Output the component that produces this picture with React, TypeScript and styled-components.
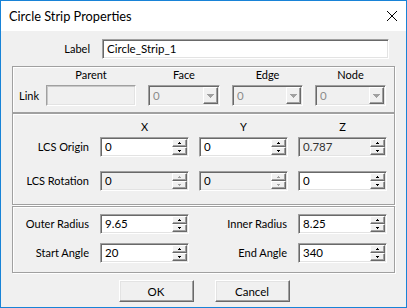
import React from "react";
import styled, { createGlobalStyle } from "styled-components";

const GlobalStyle = createGlobalStyle`
  html, body { margin: 0; padding: 0; background: #fff; }
  body {
    font-family: Lato, "Noto Sans", sans-serif;
    font-size: 11px;
    color: #000;
  }
  * { box-sizing: border-box; }
`;

const Window = styled.div`
  width: 407px;
  height: 308px;
  border: 1px solid #1883d7;
  background: #f0f0f0;
  display: flex;
  flex-direction: column;
`;

const TitleBar = styled.div`
  height: 30px;
  flex: none;
  background: #fff;
  display: flex;
  align-items: center;
  justify-content: space-between;
  padding: 0 9px 0 8px;
`;

const Title = styled.span`
  font-size: 12.8px;
  line-height: 14px;
`;

const Body = styled.div`
  display: flex;
  flex-direction: column;
  padding: 8px 10px 0 11px;
`;

const LabelRow = styled.div`
  display: grid;
  grid-template-columns: 90px 287px;
  align-items: center;
  height: 20px;
  margin-bottom: 7px;
`;

const Caption = styled.span<{ $align?: string }>`
  white-space: nowrap;
  line-height: 14px;
  text-align: ${(p) => p.$align || "right"};
  padding-right: ${(p) => (p.$align === "left" ? 0 : 12)}px;
`;

const Group = styled.div<{ $pt: number; $pb: number; $mt?: number; $gap: number }>`
  width: 383px;
  margin-top: ${(p) => p.$mt || 0}px;
  padding: ${(p) => p.$pt}px 0 ${(p) => p.$pb}px 0;
  border: 1px solid #a0a0a0;
  box-shadow: inset 1px 1px 0 #fff, 1px 1px 0 #fff;
  display: flex;
  flex-direction: column;
  gap: ${(p) => p.$gap}px;
`;

const LinkGrid = styled.div`
  display: grid;
  grid-template-columns: 15px 90px 72px 71px 71px;
  column-gap: 12px;
  row-gap: 3px;
  padding-left: 6px;
  align-items: center;
`;

const FieldGrid = styled.div<{ $mt?: number }>`
  display: grid;
  grid-template-columns: 77px 89px 89px 89px;
  column-gap: 10px;
  align-items: center;
  margin-top: ${(p) => p.$mt || 0}px;
`;

const Head = styled.span`
  text-align: center;
  line-height: 14px;
  white-space: nowrap;
`;

const RowLabel = styled.span`
  text-align: right;
  white-space: nowrap;
  line-height: 14px;
  padding-right: 1px;
`;

const Sunken = styled.div<{ $w: number; $h: number; $bg?: string; $soft?: boolean }>`
  width: ${(p) => p.$w}px;
  height: ${(p) => p.$h}px;
  background: ${(p) => p.$bg || "#fff"};
  border: 1px solid;
  border-color: #a0a0a0 #fff #fff #a0a0a0;
  box-shadow: inset 1px 1px 0 ${(p) => (p.$soft ? "#c8c8c8" : "#696969")},
    inset -1px -1px 0 #e3e3e3;
  padding: 1px;
  display: flex;
  align-items: stretch;
`;

const Value = styled.span<{ $color?: string }>`
  flex: 1;
  padding-left: 3px;
  line-height: 16px;
  font-size: 11.5px;
  display: flex;
  align-items: center;
  color: ${(p) => p.$color || "#000"};
  white-space: nowrap;
  overflow: hidden;
`;

const SpinCol = styled.div`
  width: 15px;
  display: flex;
  flex-direction: column;
`;

const Raised = styled.div`
  flex: 1;
  background: #f0f0f0;
  border: 1px solid;
  border-color: #fff #696969 #696969 #fff;
  box-shadow: inset -1px -1px 0 #a0a0a0;
  display: flex;
  align-items: center;
  justify-content: center;
`;

const DropBtn = styled(Raised)`
  flex: none;
  width: 15px;
`;

const ButtonRow = styled.div`
  display: flex;
  justify-content: center;
  gap: 21px;
  margin-top: 7px;
`;

const PushButton = styled.button`
  width: 75px;
  height: 22px;
  padding: 0;
  font-family: inherit;
  font-size: 11.5px;
  color: #000;
  background: #f0f0f0;
  border: 1px solid;
  border-color: #fff #696969 #696969 #fff;
  box-shadow: inset -1px -1px 0 #a0a0a0, inset 1px 1px 0 #e3e3e3;
`;

const SpinArrow: React.FC<{ up?: boolean; color: string }> = ({ up, color }) => (
  <svg width="3" height="2" shapeRendering="crispEdges">
    <rect x={up ? 1 : 0} y={0} width={up ? 1 : 3} height={1} fill={color} />
    <rect x={up ? 0 : 1} y={1} width={up ? 3 : 1} height={1} fill={color} />
  </svg>
);

const DropArrow: React.FC<{ color: string }> = ({ color }) => (
  <svg width="7" height="4" shapeRendering="crispEdges">
    <rect x={0} y={0} width={7} height={1} fill={color} />
    <rect x={1} y={1} width={5} height={1} fill={color} />
    <rect x={2} y={2} width={3} height={1} fill={color} />
    <rect x={3} y={3} width={1} height={1} fill={color} />
  </svg>
);

interface SpinProps {
  value: string;
  readOnly?: boolean;
  lockedSpin?: boolean;
  color?: string;
}

const Spin: React.FC<SpinProps> = ({ value, readOnly, lockedSpin, color }) => {
  const arrow = lockedSpin ? "#a0a0a0" : "#000";
  return (
    <Sunken $w={89} $h={20} $bg={readOnly ? "#f0f0f0" : "#fff"}>
      <Value $color={color}>{value}</Value>
      <SpinCol>
        <Raised>
          <SpinArrow up color={arrow} />
        </Raised>
        <Raised>
          <SpinArrow color={arrow} />
        </Raised>
      </SpinCol>
    </Sunken>
  );
};

const Combo: React.FC<{ w: number }> = ({ w }) => (
  <Sunken $w={w} $h={21} $bg="#f0f0f0">
    <Value $color="#8c8c8c">0</Value>
    <DropBtn>
      <DropArrow color="#a0a0a0" />
    </DropBtn>
  </Sunken>
);

const CloseIcon = () => (
  <svg width="10" height="10" viewBox="0 0 10 10">
    <path d="M0 0 L10 10 M10 0 L0 10" stroke="#000" strokeWidth="1" />
  </svg>
);

export default function App() {
  return (
    <>
      <GlobalStyle />
      <Window>
        <TitleBar>
          <Title>Circle Strip Properties</Title>
          <CloseIcon />
        </TitleBar>
        <Body>
          <LabelRow>
            <Caption>Label</Caption>
            <Sunken $w={287} $h={20}>
              <Value>Circle_Strip_1</Value>
            </Sunken>
          </LabelRow>

          <Group $pt={1} $pb={6} $gap={0}>
            <LinkGrid>
              <span />
              <Head>Parent</Head>
              <Head>Face</Head>
              <Head>Edge</Head>
              <Head>Node</Head>
              <Caption $align="left">Link</Caption>
              <Sunken $w={90} $h={21} $bg="#f0f0f0" $soft />
              <Combo w={72} />
              <Combo w={71} />
              <Combo w={71} />
            </LinkGrid>
          </Group>

          <Group $pt={6} $pb={13} $gap={3}>
            <FieldGrid>
              <span />
              <Head>X</Head>
              <Head>Y</Head>
              <Head>Z</Head>
            </FieldGrid>
            <FieldGrid>
              <RowLabel>LCS Origin</RowLabel>
              <Spin value="0" />
              <Spin value="0" />
              <Spin value="0.787" readOnly color="#333" />
            </FieldGrid>
            <FieldGrid $mt={11}>
              <RowLabel>LCS Rotation</RowLabel>
              <Spin value="0" readOnly lockedSpin />
              <Spin value="0" readOnly lockedSpin />
              <Spin value="0" />
            </FieldGrid>
          </Group>

          <Group $pt={7} $pb={9} $mt={1} $gap={9}>
            <FieldGrid>
              <RowLabel>Outer Radius</RowLabel>
              <Spin value="9.65" />
              <RowLabel>Inner Radius</RowLabel>
              <Spin value="8.25" />
            </FieldGrid>
            <FieldGrid>
              <RowLabel>Start Angle</RowLabel>
              <Spin value="20" />
              <RowLabel>End Angle</RowLabel>
              <Spin value="340" />
            </FieldGrid>
          </Group>

          <ButtonRow>
            <PushButton>OK</PushButton>
            <PushButton>Cancel</PushButton>
          </ButtonRow>
        </Body>
      </Window>
    </>
  );
}
